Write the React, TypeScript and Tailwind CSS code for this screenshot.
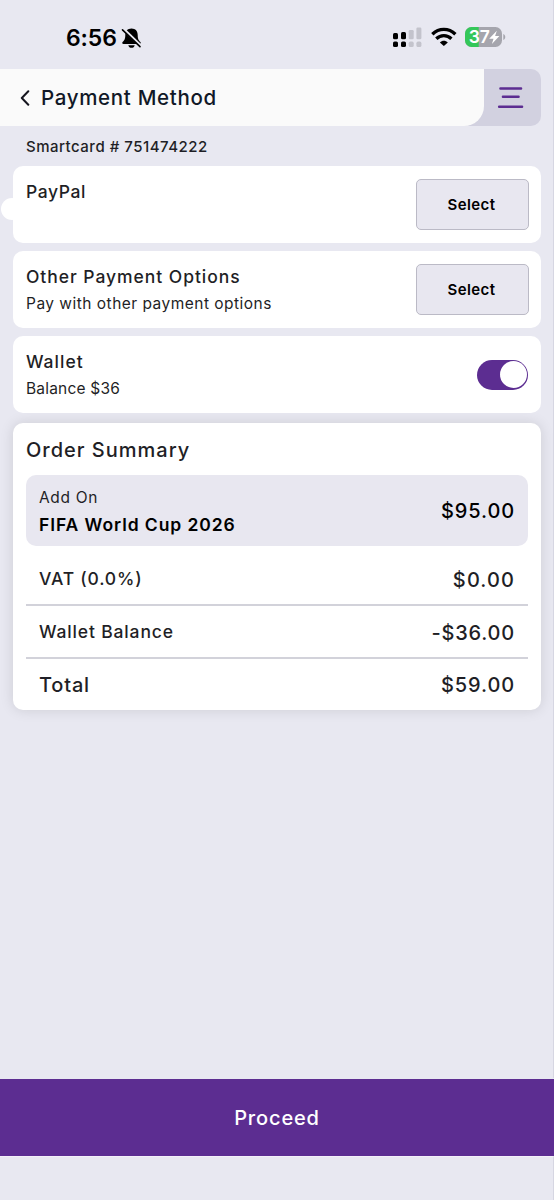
import React, { useState } from "react";

interface PaymentOption {
  id: string;
  title: string;
  note?: string;
}

interface SummaryRow {
  label: string;
  amount: string;
  labelClass: string;
  amountClass: string;
}

const options: PaymentOption[] = [
  { id: "paypal", title: "PayPal" },
  { id: "other", title: "Other Payment Options", note: "Pay with other payment options" },
];

const rows: SummaryRow[] = [
  { label: "VAT (0.0%)", amount: "$0.00", labelClass: "text-[17.5px] tracking-[0.8px]", amountClass: "tracking-[1.1px]" },
  { label: "Wallet Balance", amount: "-$36.00", labelClass: "text-[17.5px] tracking-[0.85px]", amountClass: "tracking-[0.8px]" },
  { label: "Total", amount: "$59.00", labelClass: "text-[20px] tracking-[0.8px]", amountClass: "tracking-[0.9px]" },
];

const titleClass: Record<string, string> = {
  paypal: "tracking-[0.6px]",
  other: "tracking-[0.95px]",
};

const StatusBar: React.FC = () => (
  <div className="flex h-[69px] items-start justify-between pt-[26px] pr-[47px] pl-[66px] text-black">
    <div className="flex items-center gap-[3px]">
      <span className="w-[52px] text-[23px] leading-[24px] font-semibold tracking-[-0.1px]">6:56</span>
      <svg width="21" height="22" viewBox="0 0 21 22">
        <path
          d="M10.500 1.500C6.500 1.500 4.300 4.300 4.300 8c0 4.500-1.300 5.500-2.700 7-.8.900-.3 2 .8 2h16.200c1.100 0 1.600-1.100.8-2-1.400-1.500-2.700-2.500-2.700-7 0-3.700-2.200-6.500-6.200-6.500z"
          fill="#000"
        />
        <path d="M7.300 18.200h6.400c-.3 1.700-1.600 2.600-3.200 2.600s-2.900-.9-3.200-2.600z" fill="#000" />
        <path d="M2.400 2.200L20 19" stroke="#e8e8f1" strokeWidth="3" />
        <path d="M1.500 2.800L19 19.700" stroke="#000" strokeWidth="1.600" strokeLinecap="round" />
      </svg>
    </div>
    <div className="flex">
      <svg width="30" height="22" viewBox="0 0 30 22">
        <g fill="#000">
          <rect x="0" y="7" width="5" height="6.300" rx="1.500" />
          <rect x="8" y="6" width="5" height="7.300" rx="1.500" />
          <rect x="0" y="15.600" width="5" height="5.400" rx="1.600" />
          <rect x="8" y="15.600" width="5" height="5.400" rx="1.600" />
        </g>
        <g fill="#c3c3cc">
          <rect x="15.700" y="4" width="5" height="9.300" rx="1.300" />
          <rect x="23.400" y="1.500" width="5" height="11.800" rx="1.300" />
          <rect x="15.700" y="15.600" width="5" height="5.400" rx="1.600" />
          <rect x="23.400" y="15.600" width="5" height="5.400" rx="1.600" />
        </g>
      </svg>
      <svg className="ml-[8px]" width="26" height="22" viewBox="0 0 26 22" fill="none" stroke="#000">
        <path d="M1.300 8.300C8 1.700 17.700 1.700 24.400 8.300" strokeWidth="3.300" />
        <path d="M5.300 12.700c4.300-4.200 10.800-4.200 15.100 0" strokeWidth="3.300" />
        <path d="M12.850 20L8.900 16.400c2.300-2.100 5.600-2.100 7.900 0z" fill="#000" stroke="none" />
      </svg>
      <svg className="ml-[8px]" width="41" height="22" viewBox="0 0 41 22">
        <clipPath id="cell">
          <rect x="0" y="1" width="37" height="20" rx="6.500" />
        </clipPath>
        <g clipPath="url(#cell)">
          <rect x="0" y="1" width="37" height="20" fill="#a5a5ad" />
          <rect x="0" y="1" width="13.700" height="20" fill="#34c759" />
        </g>
        <path d="M38.300 8c2.600.7 2.600 5.300 0 6z" fill="#a5a5ad" />
        <text x="3.800" y="17.300" fill="#fff" fontSize="17.500" fontWeight="600" fontFamily="Inter" letterSpacing="-0.3">37</text>
        <path d="M31.800 4.800l-7.600 8h4.300l-1.600 5.200 7.500-8.100h-4.300z" fill="#fff" />
      </svg>
    </div>
  </div>
);

const Header: React.FC = () => (
  <header className="mr-[12px] flex h-[57px] rounded-[10px] bg-[#d2d1e0]">
    <div className="flex w-[484px] items-center rounded-br-[20px] bg-[#fafafa] pl-[20px]">
      <svg width="10" height="16" viewBox="0 0 10 16" fill="none">
        <path d="M8.300 1.300L1.800 8l6.500 6.700" stroke="#15151f" strokeWidth="2" strokeLinecap="round" strokeLinejoin="round" />
      </svg>
      <h1 className="ml-[11px] pt-[1px] text-[20.5px] font-medium tracking-[0.68px] text-[#111827]">Payment Method</h1>
    </div>
    <button className="pb-[2px] pl-[13px]" aria-label="Menu">
      <svg width="27" height="24" viewBox="0 0 27 24" stroke="#5c2d91" strokeWidth="2.400" strokeLinecap="round">
        <path d="M3.400 3.500h20.700M5.900 11.800h15.700M2.100 21.700h23" />
      </svg>
    </button>
  </header>
);

const App: React.FC = () => {
  const [selected, setSelected] = useState<string | null>(null);
  const [useWallet, setUseWallet] = useState(true);

  return (
    <div className="flex h-[1200px] w-[554px] flex-col overflow-hidden bg-[#e8e8f1] font-['Inter',sans-serif] text-[#1f1f26]">
      <div className="flex h-[1078px] flex-col border-r border-[#d6d6e2]">
        <StatusBar />
        <Header />

        <main className="pr-[12px] pl-[13px]">
          <p className="h-[40px] pl-[13px] text-[15px] leading-[42px] font-medium tracking-[0.5px]">Smartcard # 751474222</p>

          <div className="flex flex-col gap-2">
            {options.map((o) => (
              <section key={o.id} className="relative flex h-[77px] justify-between rounded-[10px] bg-white p-[13px] pr-[12px]">
                {o.id === "paypal" && (
                  <span className="absolute top-[32px] left-[-12px] size-[22px] rounded-full bg-white" />
                )}
                <div>
                  <h2 className={`text-[17.5px] leading-[25px] font-medium ${titleClass[o.id]}`}>{o.title}</h2>
                  {o.note && <p className="mt-[3px] text-[15.5px] leading-[24px] tracking-[0.48px]">{o.note}</p>}
                </div>
                <button
                  onClick={() => setSelected(selected === o.id ? null : o.id)}
                  className="h-[51px] w-[113px] rounded-[5px] border border-[#bbbac6] bg-[#e8e7f0] pt-[2px] pr-[2px] text-[15px] font-semibold tracking-[0.4px] text-black"
                >
                  Select
                </button>
              </section>
            ))}

            <section className="flex h-[77px] items-center justify-between rounded-[10px] bg-white px-[13px]">
              <div>
                <h2 className="text-[17.5px] leading-[25px] font-medium tracking-[1px]">Wallet</h2>
                <p className="mt-[3px] text-[15.5px] leading-[24px] tracking-[0.2px]">Balance $36</p>
              </div>
              <button
                onClick={() => setUseWallet(!useWallet)}
                className={`flex h-[30px] w-[51px] items-center rounded-full px-[1px] ${
                  useWallet ? "justify-end bg-[#5c2d91]" : "justify-start bg-gray-300"
                }`}
              >
                <span className="size-[27px] rounded-full bg-white" />
              </button>
            </section>
          </div>

          <section className="mt-[10px] h-[287px] rounded-[10px] bg-white px-[13px] shadow-[0_0_14px_rgba(0,0,0,0.12)]">
            <h2 className="h-[52px] text-[20px] leading-[54px] font-medium tracking-[1px]">Order Summary</h2>
            <div className="flex h-[71px] items-center justify-between rounded-[10px] bg-[#e8e7f0] px-[13px] text-black">
              <div className="pt-[1px]">
                <p className="text-[15.5px] leading-[26px] tracking-[0.65px] text-[#1f1f26]">Add On</p>
                <p className="text-[17.5px] leading-[27px] font-semibold tracking-[0.92px]">FIFA World Cup 2026</p>
              </div>
              <span className="pt-[1px] text-[20px] font-medium tracking-[0.9px]">$95.00</span>
            </div>
            <div className="pt-[7px]">
              {rows.map((r, i) => (
                <div
                  key={r.label}
                  className={`flex h-[53px] items-center justify-between px-[13px] font-medium ${
                    i < rows.length - 1 ? "border-b-2 border-[#d2d2da] pt-[2px]" : "pb-[2px]"
                  }`}
                >
                  <span className={r.labelClass}>{r.label}</span>
                  <span className={`text-[20px] ${r.amountClass}`}>{r.amount}</span>
                </div>
              ))}
            </div>
          </section>
        </main>
      </div>

      <button className="mt-[1px] h-[77px] bg-[#5c2d91] text-[20px] font-medium tracking-[0.85px] text-white">Proceed</button>
      <div className="flex-1 border-t border-r border-t-[#f3eff9] border-r-[#d6d6e2]" />
    </div>
  );
};

export default App;
